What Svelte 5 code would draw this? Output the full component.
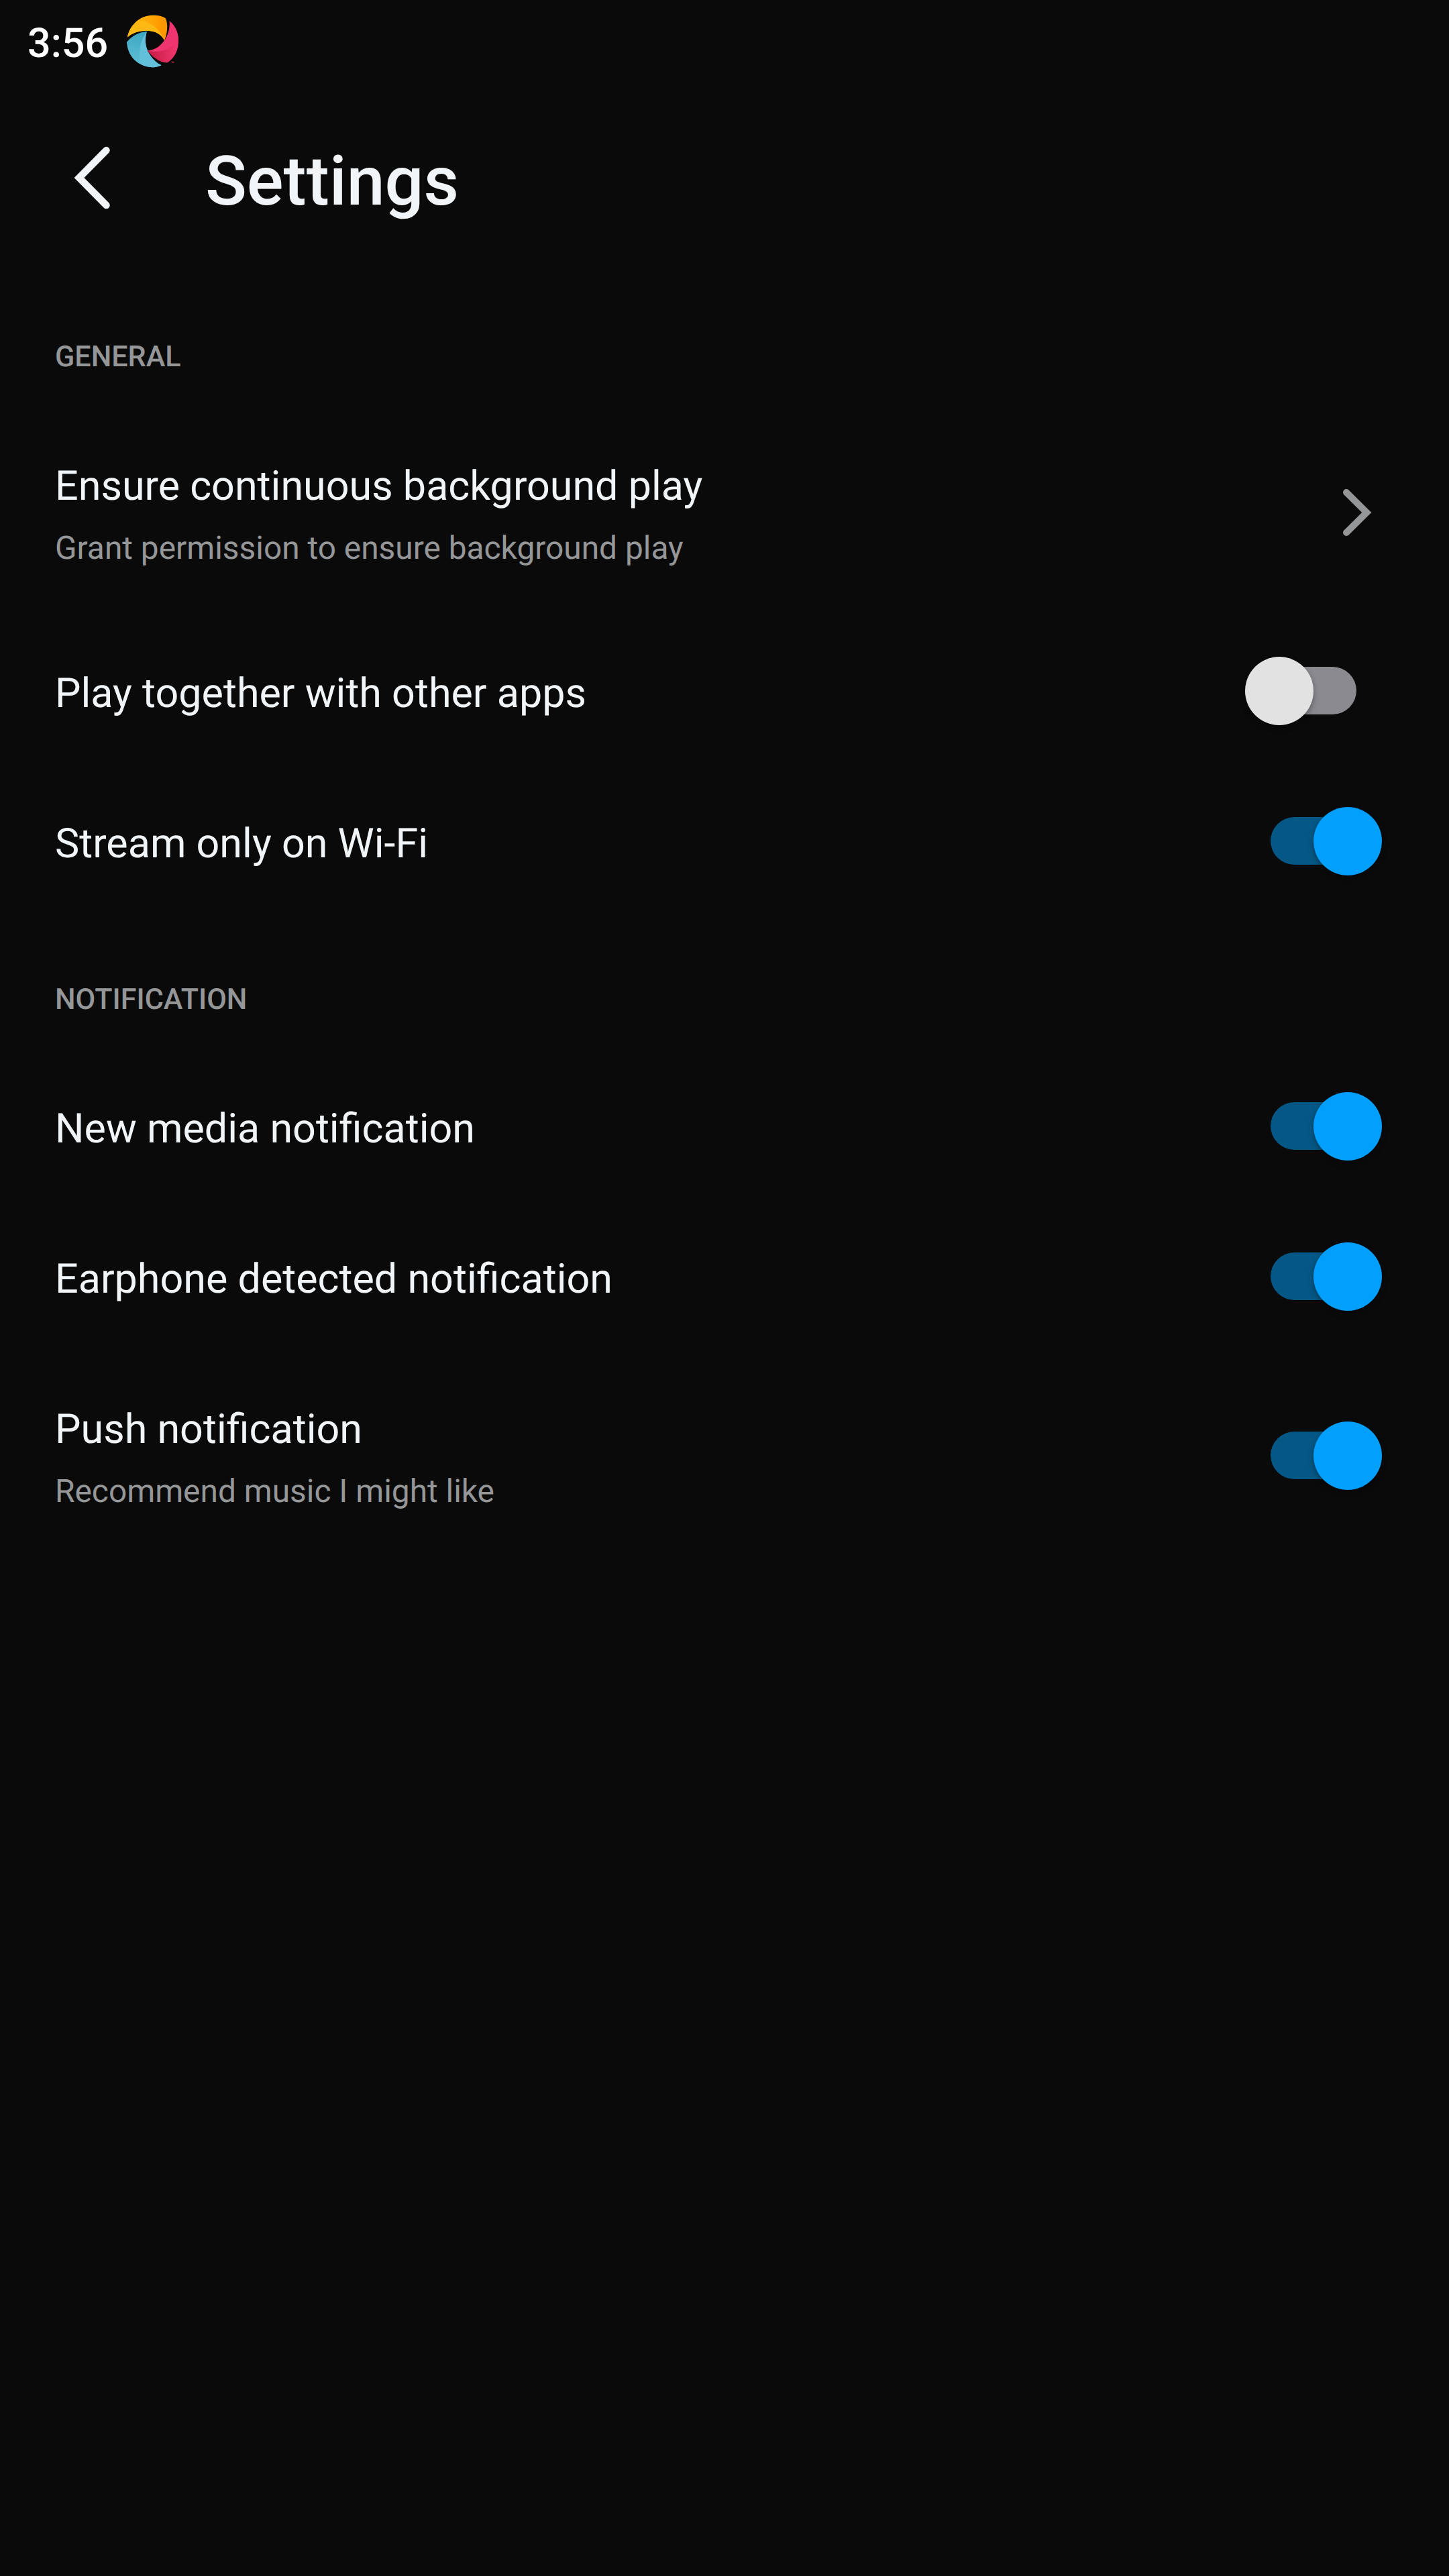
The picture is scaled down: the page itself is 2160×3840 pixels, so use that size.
<script>
  const sections = [
    {
      label: 'GENERAL',
      items: [
        { title: 'Ensure continuous background play', detail: 'Grant permission to ensure background play', link: true },
        { title: 'Play together with other apps', on: false },
        { title: 'Stream only on Wi-Fi', on: true }
      ]
    },
    {
      label: 'NOTIFICATION',
      items: [
        { title: 'New media notification', on: true },
        { title: 'Earphone detected notification', on: true },
        { title: 'Push notification', detail: 'Recommend music I might like', on: true }
      ]
    }
  ];
</script>

<main class="screen">
  <div class="status">
    <span class="clock">3:56</span>
    <svg class="logo" viewBox="567 66 234 236" aria-hidden="true">
      <defs>
        <linearGradient id="amber" x1="0" x2="1"><stop offset="0.35" stop-color="#ffb20c" /><stop offset="0.9" stop-color="#ff9700" /></linearGradient>
        <linearGradient id="teal" x1="0.6" y1="0" x2="0.3" y2="1"><stop offset="0" stop-color="#3aa5bf" /><stop offset="0.9" stop-color="#5cbdd6" /></linearGradient>
        <linearGradient id="rose" x1="0" x2="1" y1="0.6" y2="0.5"><stop offset="0.1" stop-color="#c71f47" /><stop offset="0.9" stop-color="#f0356e" /></linearGradient>
      </defs>
      <path fill="url(#amber)" d="M570 166C580 110 628 68 682 68C706 68 728 72 741 82C752 108 749 150 735 181C722 152 692 137 655 137C620 138 592 147 570 166Z" />
      <path fill="#fdb813" d="M570 166C576 132 596 106 620 92C672 94 715 128 735 181C722 152 692 137 655 137C620 138 592 147 570 166Z" />
      <path fill="url(#teal)" d="M567 188C590 160 620 144 657 140C646 175 650 208 664 234C680 262 699 281 722 291C706 299 692 300 680 300C615 298 570 250 567 188Z" />
      <path fill="#62c0da" d="M657 140C646 175 650 208 664 234C680 262 699 281 722 291C706 299 692 300 680 300C660 299 642 294 627 285C618 230 628 178 657 140Z" />
      <path fill="url(#rose)" d="M758 94C785 115 798 150 798 185C798 225 780 260 748 280C713 280 682 255 660 227C700 223 726 197 739 175C755 150 761 120 758 94Z" />
      <path fill="#ee356f" d="M758 94C785 115 798 150 798 178C765 222 712 238 660 227C700 223 726 197 739 175C755 150 761 120 758 94Z" />
      <text class="mark" x="765" y="290">™</text>
    </svg>
  </div>

  <header>
    <svg class="back" viewBox="0 0 56 96" aria-label="Back"><path d="M48.5 7 8 48 48.5 89" /></svg>
    <h1>Settings</h1>
  </header>

  {#each sections as section}
    <section>
      <h2>{section.label}</h2>
      {#each section.items as item}
        <div class="row" class:tall={item.detail}>
          <div class="copy">
            <div class="title">{item.title}</div>
            {#if item.detail}<div class="detail">{item.detail}</div>{/if}
          </div>
          {#if item.link}
            <svg class="chevron" viewBox="0 0 44 74" aria-hidden="true"><path d="M6 7 36.3 37 6 67" /></svg>
          {:else}
            <div class="track" class:on={item.on} role="switch" aria-checked={item.on} aria-label={item.title}><div class="knob"></div></div>
          {/if}
        </div>
      {/each}
    </section>
  {/each}
</main>

<style>
  :global(body) { background: #0a0a0a; }
  .screen {
    min-height: 3840px;
    background: #0a0a0a;
    color: #f2f5f8;
    font-family: Roboto, "Liberation Sans", sans-serif;
    text-rendering: geometricPrecision;
  }
  .status {
    display: flex;
    align-items: flex-start;
    gap: 28px;
    height: 128px;
    padding: 22px 0 0 41px;
    box-sizing: border-box;
  }
  .clock { color: #fff; font-size: 61px; font-weight: 500; line-height: 84px; }
  .logo { width: 78px; height: 79px; overflow: visible; }
  .mark { fill: #e8336b; font-size: 22px; font-weight: 700; }
  header {
    display: flex;
    align-items: center;
    gap: 140px;
    height: 280px;
    padding: 4px 0 0 110px;
    box-sizing: border-box;
  }
  .back { width: 56px; height: 96px; margin-bottom: 10px; }
  .back path, .chevron path { fill: none; stroke-width: 10.5; stroke-linecap: round; stroke-linejoin: miter; }
  .back path { stroke: #f2f5f8; }
  h1 { margin: 0; font-size: 102.2px; font-weight: 500; line-height: 120px; }
  h2 {
    height: 201px;
    margin: 0;
    padding: 94px 0 0 82px;
    box-sizing: border-box;
    color: #959698;
    font-size: 43.1px;
    font-weight: 500;
    line-height: 60px;
  }
  .row {
    display: flex;
    align-items: center;
    justify-content: space-between;
    height: 224px;
    padding: 0 138px 0 82px;
    box-sizing: border-box;
  }
  .row.tall { height: 309px; }
  .copy { padding-top: 6px; }
  .title { font-size: 61.04px; line-height: 72px; }
  .detail { margin: 28px 0 -1px; color: #959698; font-size: 47.85px; line-height: 58px; }
  .chevron { width: 44px; height: 74px; margin-right: -23px; }
  .chevron path { stroke: #959698; stroke-width: 10; }
  .track {
    position: relative;
    width: 128px;
    height: 71px;
    margin-bottom: 1px;
    border-radius: 36px;
    background: #8b8a8f;
  }
  .row.tall .track { margin-bottom: 0; }
  .knob {
    position: absolute;
    top: -15.5px;
    left: -38px;
    width: 102px;
    height: 102px;
    border-radius: 50%;
    background: #e2e2e2;
    box-shadow: 0 4px 8px rgb(0 0 0 / 0.35);
  }
  .track.on { background: #055886; }
  .track.on .knob { left: 64px; background: #029ffd; }
</style>
